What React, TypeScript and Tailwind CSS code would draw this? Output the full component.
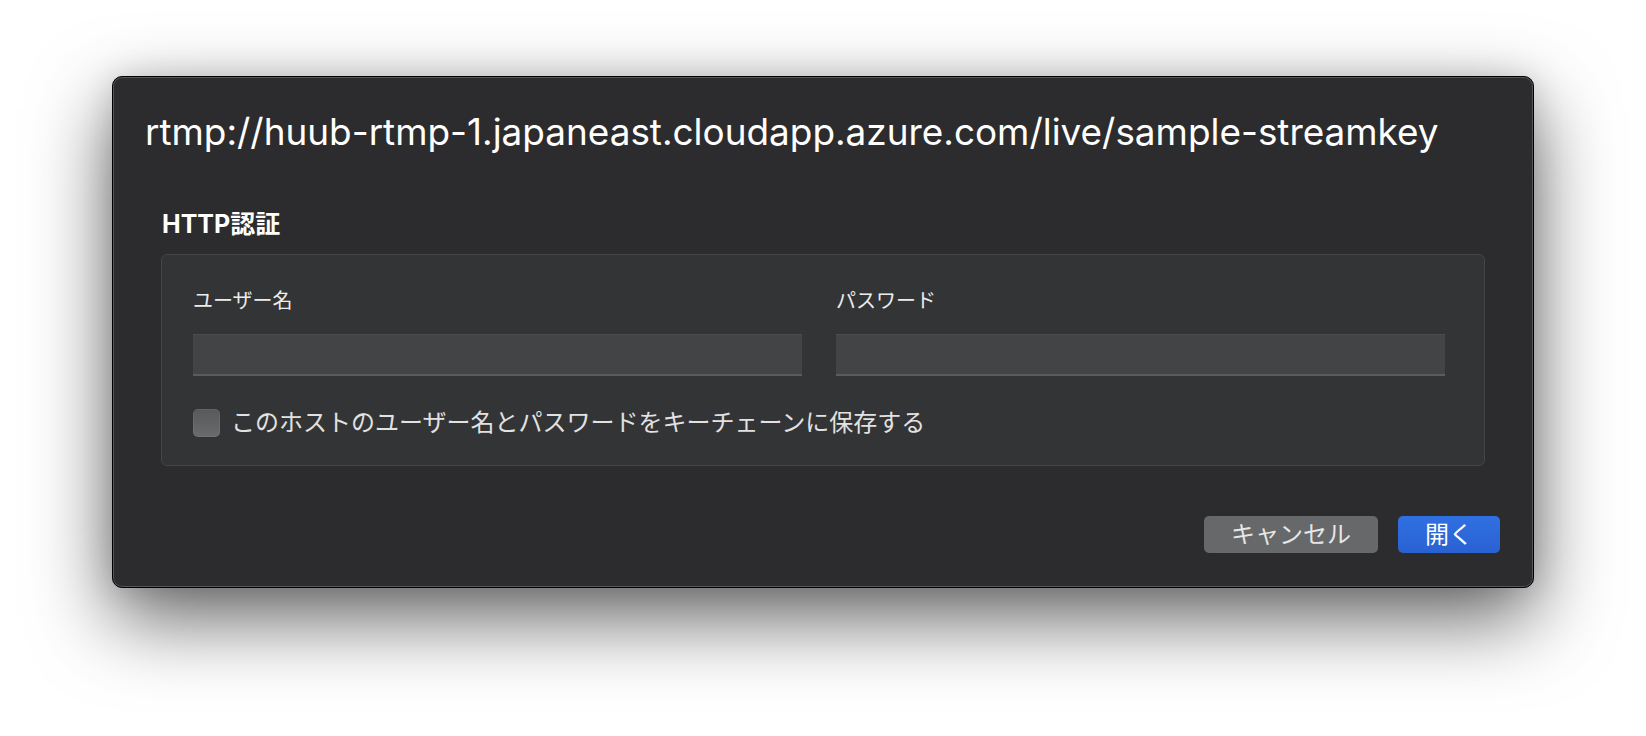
import React, { useState } from "react";

const jp = "font-['Inter','Noto_Sans_CJK_JP',sans-serif]";

export default function App() {
  const [user, setUser] = useState("");
  const [pass, setPass] = useState("");
  const [save, setSave] = useState(false);

  return (
    <div className={`w-[1646px] h-[736px] bg-white pl-[112px] pt-[76px] ${jp}`}>
      <div className="w-[1422px] h-[512px] flex flex-col rounded-[10px] border border-black bg-[#2c2c2e] shadow-[inset_0_0_0_1px_rgba(255,255,255,0.2),0_30px_80px_rgba(0,0,0,0.62),0_0_30px_rgba(0,0,0,0.12)]">
        <h1 className="pl-[32px] pt-[37px] text-[36.9px] leading-none text-white">
          rtmp://huub-rtmp-1.japaneast.cloudapp.azure.com/live/sample-streamkey
        </h1>

        <h2 className="pl-[49px] mt-[61px] text-[25px] leading-none font-bold text-white">HTTP認証</h2>

        <div className="mx-[48px] mt-[17px] rounded-[6px] border border-[#444547] bg-[#333436] pl-[31px] pr-[39px] pt-[36px] pb-[28px]">
          <div className="grid grid-cols-2 gap-[34px]">
            <label className="flex flex-col">
              <span className="text-[20px] leading-none text-[#ececec]">ユーザー名</span>
              <input
                type="text"
                value={user}
                onChange={(e) => setUser(e.target.value)}
                className="mt-[23px] h-[42px] w-full bg-[#434446] border-t border-t-[#4b4c4e] border-b-2 border-b-[#5b5c5e] outline-none px-2 text-[20px] text-white"
              />
            </label>
            <label className="flex flex-col">
              <span className="text-[20px] leading-none text-[#ececec]">パスワード</span>
              <input
                type="password"
                value={pass}
                onChange={(e) => setPass(e.target.value)}
                className="mt-[23px] h-[42px] w-full bg-[#434446] border-t border-t-[#4b4c4e] border-b-2 border-b-[#5b5c5e] outline-none px-2 text-[20px] text-white"
              />
            </label>
          </div>

          <label className="mt-[33px] flex items-center gap-[11px] cursor-pointer">
            <span
              onClick={() => setSave(!save)}
              className="w-[27px] h-[28px] rounded-[5px] bg-gradient-to-b from-[#58595b] to-[#6a6b6d] shadow-[inset_0_0_0_1px_rgba(255,255,255,0.06)]"
            />
            <span className="text-[24px] leading-none text-[#e2e2e2]">
              このホストのユーザー名とパスワードをキーチェーンに保存する
            </span>
          </label>
        </div>

        <div className="mt-auto mb-[34px] mr-[33px] flex justify-end gap-[20px]">
          <button className="w-[174px] h-[37px] rounded-[5px] bg-[#676869] text-[24px] leading-none text-[#e6e6e6]">
            キャンセル
          </button>
          <button className="w-[102px] h-[37px] rounded-[5px] bg-gradient-to-b from-[#3070e2] to-[#2a61d2] text-[24px] leading-none text-white">
            開く
          </button>
        </div>
      </div>
    </div>
  );
}
